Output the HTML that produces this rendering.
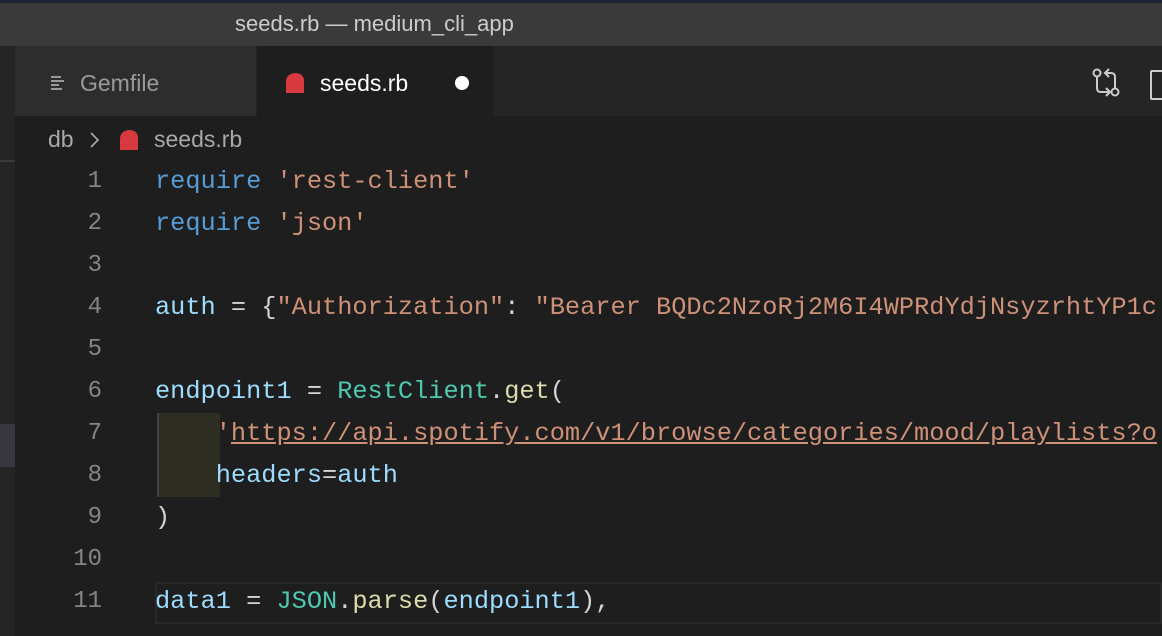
<!DOCTYPE html>
<html><head><style>
body{margin:0;width:1162px;height:636px;overflow:hidden;background:#1e1e1e;position:relative;font-family:"Liberation Sans",sans-serif}
.a{position:absolute}
.code{font-family:"Liberation Mono",monospace;font-size:25.3px;color:#d4d4d4;white-space:pre;line-height:42px}
.ln{font-family:"Liberation Mono",monospace;font-size:24px;color:#858585;width:102px;text-align:right;line-height:42px}
.k{color:#569cd6}.s{color:#ce9178}.v{color:#9cdcfe}.c{color:#4ec9b0}.f{color:#dcdcaa}
</style></head><body>
<div class="a" style="left:0;top:0;width:1162px;height:3px;background:#1a2433"></div>
<div class="a" style="left:0;top:3px;width:1162px;height:43px;background:#3a3a3a"></div>
<div class="a" style="left:235px;top:11px;font-size:22px;color:#cccccc">seeds.rb — medium_cli_app</div>
<div class="a" style="left:0;top:46px;width:15px;height:590px;background:#252526"></div>
<div class="a" style="left:0;top:160px;width:15px;height:2px;background:#3a3a3a"></div>
<div class="a" style="left:0;top:424px;width:15px;height:43px;background:#37373d"></div>
<div class="a" style="left:15px;top:46px;width:1147px;height:70px;background:#252526"></div>
<div class="a" style="left:15px;top:46px;width:241px;height:70px;background:#2d2d2d"></div>
<div class="a" style="left:257px;top:46px;width:236px;height:70px;background:#1e1e1e"></div>
<svg class="a" style="left:50px;top:75px" width="16" height="16"><path d="M1 2h10M1 6h13M1 10h8M1 14h11" stroke="#bbb" stroke-width="1.6"/></svg>
<div class="a" style="left:80px;top:70px;font-size:23px;color:#9a9a9a">Gemfile</div>
<svg class="a" style="left:285px;top:72px" width="20" height="22"><path d="M1 21V10Q1 2 10 1Q18 1 19 8V21Z" fill="#d63a3f"/></svg>
<div class="a" style="left:320px;top:70px;font-size:23px;color:#fff">seeds.rb</div>
<div class="a" style="left:455px;top:76px;width:14px;height:14px;border-radius:50%;background:#fff"></div>
<svg class="a" style="left:1090px;top:66px" width="34" height="34" fill="none" stroke="#ccc" stroke-width="2"><circle cx="7" cy="7" r="3.5"/><circle cx="25" cy="26" r="3.5"/><path d="M7 11v11q0 4 4 4h8M16 22l4 4-4 4M25 22V11q0-4-4-4h-6M19 3l-4 4 4 4"/></svg>
<div class="a" style="left:1150px;top:70px;width:14px;height:26px;border:2px solid #ccc;border-radius:2px"></div>
<div class="a" style="left:48px;top:126px;font-size:23px;color:#a8a8a8">db</div>
<svg class="a" style="left:89px;top:131px" width="12" height="18"><path d="M2 2l7 7-7 7" stroke="#aaa" stroke-width="1.6" fill="none"/></svg>
<svg class="a" style="left:119px;top:129px" width="20" height="22"><path d="M1 21V10Q1 2 10 1Q18 1 19 8V21Z" fill="#d63a3f"/></svg>
<div class="a" style="left:154px;top:126px;font-size:23px;color:#a8a8a8">seeds.rb</div>
<div class="a" style="left:157px;top:413px;width:61px;height:84px;background:#2e2d22;border-left:2px solid #444"></div>
<div class="a" style="left:155px;top:582px;width:1007px;height:42px;border:2px solid #282828;box-sizing:border-box"></div>
<div class="a ln" style="left:0;top:161px">1<br>2<br>3<br>4<br>5<br>6<br>7<br>8<br>9<br>10<br>11</div>
<div class="a code" style="left:155px;top:161px"><span class="k">require</span> <span class="s">'rest-client'</span>
<span class="k">require</span> <span class="s">'json'</span>

<span class="v">auth</span> = {<span class="s">"Authorization"</span>: <span class="s">"Bearer BQDc2NzoRj2M6I4WPRdYdjNsyzrhtYP1c</span>

<span class="v">endpoint1</span> = <span class="c">RestClient</span>.<span class="f">get</span>(
    <span class="s">'<u>https://api.spotify.com/v1/browse/categories/mood/playlists?o</u></span>
    <span class="v">headers</span>=<span class="v">auth</span>
)

<span class="v">data1</span> = <span class="c">JSON</span>.<span class="f">parse</span>(<span class="v">endpoint1</span>),</div>
</body></html>
